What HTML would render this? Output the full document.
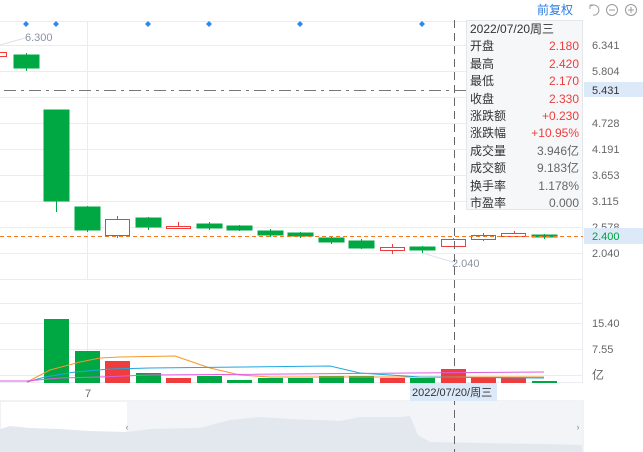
<!DOCTYPE html>
<html><head><meta charset="utf-8"><style>
html,body{margin:0;padding:0;background:#fff;}
body{width:643px;height:452px;overflow:hidden;position:relative;font-family:"Liberation Sans","Noto Sans CJK SC",sans-serif;}
svg{position:absolute;left:0;top:0;}
.tip{position:absolute;left:466px;top:20px;width:115px;height:188px;background:#f6f7f9;border:1px solid #e3e6ea;font-size:12px;color:#333;}
.tip div{height:17.4px;line-height:17.4px;padding:0 3px 0 3px;display:flex;justify-content:space-between;}
.r{color:#f03c3c}.g{color:#666}
</style></head><body>
<svg width="643" height="452" font-family="Liberation Sans, Noto Sans CJK SC, sans-serif">
<g stroke="#e9ecf0" stroke-width="1">
<line x1="0" y1="21.5" x2="583" y2="21.5"/><line x1="0" y1="45.5" x2="583" y2="45.5"/><line x1="0" y1="71.5" x2="583" y2="71.5"/><line x1="0" y1="97.5" x2="583" y2="97.5"/><line x1="0" y1="123.5" x2="583" y2="123.5"/><line x1="0" y1="149.5" x2="583" y2="149.5"/><line x1="0" y1="175.5" x2="583" y2="175.5"/><line x1="0" y1="201.5" x2="583" y2="201.5"/><line x1="0" y1="227.5" x2="583" y2="227.5"/><line x1="0" y1="253.5" x2="583" y2="253.5"/><line x1="0" y1="279.5" x2="583" y2="279.5"/>
<line x1="87.5" y1="21" x2="87.5" y2="279"/>
<line x1="0" y1="303.5" x2="583" y2="303.5"/><line x1="0" y1="323.5" x2="583" y2="323.5"/><line x1="0" y1="349.5" x2="583" y2="349.5"/><line x1="0" y1="375.5" x2="583" y2="375.5"/><line x1="0" y1="382.5" x2="583" y2="382.5"/>
<line x1="87.5" y1="303" x2="87.5" y2="382"/>
<line x1="582.5" y1="21" x2="582.5" y2="382"/>
</g>
<rect x="0" y="401" width="583" height="51" fill="#fff" stroke="#e3e6ea"/>
<rect x="127" y="401" width="455" height="51" fill="#f2f4f7"/>
<path d="M0,429 L10,426 L30,428 L60,429 L90,431 L126,432 L150,429 L200,428 L230,420 L260,417 L290,419 L320,420 L340,421 L360,417 L400,417 L410,416 L418,435 L430,442 L480,443 L540,444 L582,445 L582,452 L0,452Z" fill="#e3e8ef"/>
<text x="127" y="430" font-size="9" fill="#7b8aa0" text-anchor="middle">‹</text>
<text x="578" y="430" font-size="9" fill="#7b8aa0" text-anchor="middle">›</text>
<g fill="#2f88f0"><path d="M26,21l3,3l-3,3l-3,-3z"/><path d="M56,21l3,3l-3,3l-3,-3z"/><path d="M148,21l3,3l-3,3l-3,-3z"/><path d="M209,21l3,3l-3,3l-3,-3z"/><path d="M300,21l3,3l-3,3l-3,-3z"/><path d="M422,21l3,3l-3,3l-3,-3z"/></g>
<path d="M0,45 L25,38" stroke="#dde1e8" fill="none"/>
<text x="25" y="41" font-size="11" fill="#8a94a2">6.300</text>
<path d="M422,253 L453,262" stroke="#dde1e8" fill="none"/>
<text x="452" y="267" font-size="11" fill="#8a94a2">2.040</text>
<g fill="#00a843" stroke="#00a843">
<line x1="26.5" y1="53" x2="26.5" y2="71"/><rect x="14" y="55" width="25" height="13"/>
<line x1="56.5" y1="110" x2="56.5" y2="212"/><rect x="44" y="110" width="25" height="91"/>
<line x1="87.5" y1="206" x2="87.5" y2="232"/><rect x="75" y="207" width="25" height="23"/>
<line x1="148.5" y1="217" x2="148.5" y2="230"/><rect x="136" y="218" width="25" height="9"/>
<line x1="209.5" y1="222" x2="209.5" y2="230"/><rect x="197" y="224" width="25" height="4"/>
<line x1="239.5" y1="225" x2="239.5" y2="231"/><rect x="227" y="226" width="25" height="4"/>
<line x1="270.5" y1="229" x2="270.5" y2="237"/><rect x="258" y="231" width="25" height="4"/>
<line x1="300.5" y1="232" x2="300.5" y2="238"/><rect x="288" y="233" width="25" height="3"/>
<line x1="331.5" y1="237" x2="331.5" y2="244"/><rect x="319" y="238" width="25" height="4"/>
<line x1="361.5" y1="239" x2="361.5" y2="249"/><rect x="349" y="241" width="25" height="7"/>
<line x1="422.5" y1="246" x2="422.5" y2="253"/><rect x="410" y="247" width="25" height="3"/>
<line x1="544.5" y1="234" x2="544.5" y2="239"/><rect x="532" y="235" width="25" height="2"/>
</g>
<g fill="#fff" stroke="#f03c3c">
<rect x="-2.5" y="52.5" width="9" height="4"/>
<line x1="117.5" y1="216" x2="117.5" y2="238"/><rect x="105.5" y="219.5" width="24" height="16"/>
<line x1="178.5" y1="222" x2="178.5" y2="226"/><rect x="166.5" y="226.5" width="24" height="2"/>
<line x1="392.5" y1="244" x2="392.5" y2="254"/><rect x="380.5" y="247.5" width="24" height="3"/>
<line x1="453.5" y1="238" x2="453.5" y2="247"/><rect x="441.5" y="239.5" width="24" height="7"/>
<line x1="483.5" y1="233" x2="483.5" y2="241"/><rect x="471.5" y="235.5" width="24" height="4"/>
<line x1="514.5" y1="231" x2="514.5" y2="237"/><rect x="501.5" y="233.5" width="24" height="3"/>
</g>
<line x1="4" y1="90.5" x2="583" y2="90.5" stroke="#777" stroke-dasharray="12,5,3,5"/>
<line x1="0" y1="236.5" x2="583" y2="236.5" stroke="#f47a20" stroke-dasharray="4,3"/>
<line x1="454.5" y1="20" x2="454.5" y2="452" stroke="#666" stroke-dasharray="8,5"/>
<g fill="#00a843"><rect x="44" y="319" width="25" height="64"/><rect x="75" y="351" width="25" height="32"/><rect x="136" y="373" width="25" height="10"/><rect x="197" y="376" width="25" height="7"/><rect x="227" y="380" width="25" height="3"/><rect x="258" y="378" width="25" height="5"/><rect x="288" y="378" width="25" height="5"/><rect x="319" y="376" width="25" height="7"/><rect x="349" y="376" width="25" height="7"/><rect x="410" y="378" width="25" height="5"/><rect x="532" y="381" width="25" height="2"/></g>
<g fill="#f03c3c"><rect x="105" y="361" width="25" height="22"/><rect x="166" y="378" width="25" height="5"/><rect x="380" y="378" width="25" height="5"/><rect x="441" y="369" width="25" height="14"/><rect x="471" y="377" width="25" height="6"/><rect x="501" y="378" width="25" height="5"/></g>
<g fill="none" stroke-width="1">
<polyline points="27,382 50,370 80,362 100,358 120,357 175,356 210,368 240,375 270,377 544,377" stroke="#f7962a"/>
<polyline points="27,382 45,377 75,372 110,369 150,368 330,366 360,373 420,377 544,378" stroke="#22a6e0"/>
<polyline points="0,381 27,381 60,378 100,377 150,375 544,372" stroke="#e05ce0"/>
</g>
<g font-size="11" fill="#666">
<text x="592" y="49">6.341</text><text x="592" y="75">5.804</text><text x="592" y="127">4.728</text><text x="592" y="153">4.191</text><text x="592" y="179">3.653</text><text x="592" y="205">3.115</text><text x="592" y="231">2.578</text><text x="592" y="257">2.040</text>
<text x="592" y="327">15.40</text><text x="592" y="353">7.55</text><text x="592" y="379" font-size="12">亿</text>
<text x="88" y="397" text-anchor="middle">7</text>
</g>
<rect x="584" y="82" width="59" height="15" fill="#dbe9f8"/><text x="592" y="94" font-size="11" fill="#333">5.431</text>
<rect x="584" y="228" width="59" height="16" fill="#dbe9f8"/><text x="592" y="240" font-size="11" fill="#00a040">2.400</text>
<rect x="410" y="383" width="87" height="18" fill="#dbe9f8"/><text x="412" y="396" font-size="11" fill="#333">2022/07/20/周三</text>
<text x="537" y="14" font-size="12" fill="#2f7ce0">前复权</text>
<g fill="none" stroke="#999" stroke-width="1">
<path d="M590,5 L594,5 M590,5 L590,9 M591,6 A5,5 0 1 1 593,15"/>
<circle cx="612" cy="10" r="5.5"/><line x1="609" y1="10" x2="615" y2="10"/>
<circle cx="631" cy="10" r="5.5"/><line x1="628" y1="10" x2="634" y2="10"/><line x1="631" y1="7" x2="631" y2="13"/>
</g>
</svg>
<div class="tip">
<div style="color:#333">2022/07/20周三</div>
<div>开盘<span class="r">2.180</span></div>
<div>最高<span class="r">2.420</span></div>
<div>最低<span class="r">2.170</span></div>
<div>收盘<span class="r">2.330</span></div>
<div>涨跌额<span class="r">+0.230</span></div>
<div>涨跌幅<span class="r">+10.95%</span></div>
<div>成交量<span class="g">3.946亿</span></div>
<div>成交额<span class="g">9.183亿</span></div>
<div>换手率<span class="g">1.178%</span></div>
<div>市盈率<span class="g">0.000</span></div>
</div>
</body></html>
